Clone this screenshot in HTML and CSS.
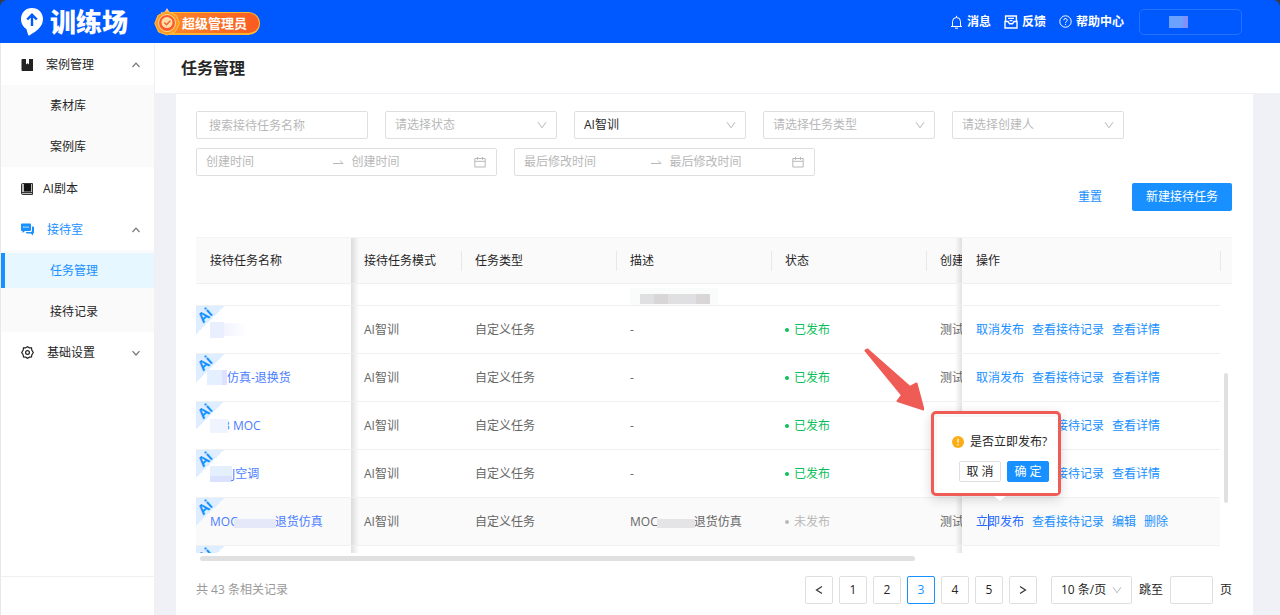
FILE: index.html
```html
<!DOCTYPE html>
<html lang="zh-CN">
<head>
<meta charset="utf-8">
<title>任务管理</title>
<link rel="stylesheet" href="styles.css">
</head>
<body>
<svg class="sprite" width="0" height="0" aria-hidden="true">
  <symbol id="chev" viewBox="0 0 10 10"><path d="M1 2.2 5 7.8 9 2.2" fill="none" stroke="currentColor"/></symbol>
  <symbol id="up" viewBox="0 0 10 10"><path d="M1.5 7 5 3.2 8.5 7" fill="none" stroke="currentColor" stroke-width="1.2"/></symbol>
  <symbol id="down" viewBox="0 0 10 10"><path d="M1.5 3.2 5 7 8.500 3.2" fill="none" stroke="currentColor" stroke-width="1.2"/></symbol>
  <symbol id="swap" viewBox="0 0 12 12"><path d="M1 7.500H11L8 4.500" fill="none" stroke="currentColor"/></symbol>
  <symbol id="cal" viewBox="0 0 12 12"><path d="M.8 2.500h10.400v8.500H.8zM.8 5.300h10.400M3.500 1v2.800M8.500 1v2.800" fill="none" stroke="currentColor"/></symbol>
</svg>
<div class="app">
  <header class="topbar">
    <a class="brand" href="#">
      <svg width="24" height="30" viewBox="0 0 24 30" aria-hidden="true">
        <path d="M12 1C5.500 1 1 5.900 1 12c0 5 2.600 8 5.500 10.200L8 27.500c.2 1 1 1.200 1.800.7C14 25.500 23 21 23 12 23 5.900 18.500 1 12 1z" fill="#fff"/>
        <path d="M12 19V9M7.200 12.500 12 7.700l4.800 4.800" fill="none" stroke="#0059ff" stroke-width="2.400"/>
      </svg>
      <span>训练场</span>
    </a>
    <div class="role">
      <svg class="medal" width="27" height="29" viewBox="0 0 27 29" aria-hidden="true">
        <path d="M7 5l3 1 3-5 3 5 3-1-1 6H8z" fill="#ffc9a8"/>
        <path d="M13 4l9.500 4.500 3 8-4.500 8.500-8 3-8.500-3L.8 16.500l3-8z" fill="#ff9a1f" stroke="#ffc04a"/>
        <circle cx="13" cy="16" r="8.500" fill="#ff5a2c" stroke="#ffe0a0"/>
        <circle cx="13" cy="15.500" r="5.500" fill="#ffdfa8"/>
        <path d="M10.300 15.500l2.200 2.200 3.800-4" fill="none" stroke="#f0642d" stroke-width="1.500"/>
      </svg>
      <span>超级管理员</span>
    </div>
    <nav class="tools">
      <a href="#"><svg width="13" height="14" viewBox="0 0 13 14" aria-hidden="true"><path d="M1 11.500h11M2.500 11.500V6.500a4 4 0 0 1 8 0v5M6.500 2.500V.8M5 13.200h3" fill="none" stroke="#fff"/></svg>消息</a>
      <a href="#"><svg width="14" height="14" viewBox="0 0 14 14" aria-hidden="true"><path d="M1.600 7V1h10.800v6M1 6.500h3l1.500 2.300h3L10 6.500h3V13H1zM4 3.400h6M5.500 5.600h3" fill="none" stroke="#fff" stroke-width="1.400"/></svg>反馈</a>
      <a href="#"><svg width="13" height="13" viewBox="0 0 13 13" aria-hidden="true"><circle cx="6.500" cy="6.500" r="5.700" fill="none" stroke="#fff"/><path d="M4.800 5.200a1.700 1.700 0 1 1 2.500 1.500q-.8.400-.8 1.300M6.500 8.900v1" fill="none" stroke="#fff"/></svg>帮助中心</a>
      <button class="account" type="button" aria-label="账户"><i></i><i></i></button>
    </nav>
  </header>
  <div class="body">
    <aside class="side">
      <nav class="menu">
        <a class="item" href="#"><svg width="12" height="12" viewBox="0 0 12 12" aria-hidden="true"><path d="M1.500 0H5v5.500l1.500-1.200L8 5.500V0h1.800v0H12v12H1.500Q.5 12 .5 11V1q0-1 1-1z" fill="#222"/></svg><span>案例管理</span><svg class="arr" width="10" height="10"><use href="#up"/></svg></a>
        <div class="sub"><a class="item" href="#">素材库</a><a class="item" href="#">案例库</a></div>
        <a class="item tight" href="#"><svg width="12" height="12" viewBox="0 0 12 12" aria-hidden="true"><path d="M1.500.5h10v11h-10Q.5 11.500.5 10V1.500q0-1 1-1z" fill="#bbb" stroke="#333"/><path d="M3 1h7v7.500H3z" fill="#111"/><path d="M1 9.500h10" stroke="#333"/></svg><span>AI剧本</span></a>
        <a class="item open" href="#"><svg width="13" height="13" viewBox="0 0 13 13" aria-hidden="true"><path d="M1 .5h8q1 0 1 1v5.500q0 1-1 1H4l-2.500 2V8H1q-1 0-1-1V1.500q0-1 1-1z" fill="#1890ff"/><path d="M11 3.500h1q1 0 1 1v5q0 1-1 1v2l-2.200-2H6q-1 0-1-1V9h4.500Q11 9 11 7.500z" fill="#1890ff"/><path d="M2.300 4.200h1.200M4.400 4.200h1.200M6.500 4.200h1.200" stroke="#fff" stroke-width="1.200"/></svg><span>接待室</span><svg class="arr" width="10" height="10"><use href="#up"/></svg></a>
        <div class="sub"><a class="item" href="#" aria-current="page"><b>任务管理</b></a><a class="item" href="#">接待记录</a></div>
        <a class="item" href="#"><svg width="13" height="13" viewBox="0 0 13 13" aria-hidden="true"><path d="M4.600 1.800 6.500.7l1.900 1.100 2.100.1.300 2.200 1.500 2.400-1.500 2.400-.3 2.100-2.100.2-1.900 1.100-1.900-1.100-2.100-.2-.3-2.100L.7 6.500l1.500-2.400.3-2.200z" fill="none" stroke="#222" stroke-width="1.200"/><circle cx="6.500" cy="6.500" r="1.900" fill="none" stroke="#222" stroke-width="1.200"/></svg><span>基础设置</span><svg class="arr" width="10" height="10"><use href="#down"/></svg></a>
      </nav>
      <div class="side-foot"></div>
    </aside>
    <main class="main">
      <h1>任务管理</h1>
      <section class="card">
        <form class="filters">
          <input class="box name" type="text" placeholder="搜索接待任务名称" aria-label="搜索接待任务名称">
          <div class="box sel"><select aria-label="状态"><option>请选择状态</option></select><svg width="10" height="10"><use href="#chev"/></svg></div>
          <div class="box sel filled"><select aria-label="模式"><option>AI智训</option></select><svg width="10" height="10"><use href="#chev"/></svg></div>
          <div class="box sel"><select aria-label="任务类型"><option>请选择任务类型</option></select><svg width="10" height="10"><use href="#chev"/></svg></div>
          <div class="box sel"><select aria-label="创建人"><option>请选择创建人</option></select><svg width="10" height="10"><use href="#chev"/></svg></div>
          <div class="box range"><input type="text" placeholder="创建时间" aria-label="创建时间起"><svg width="12" height="12"><use href="#swap"/></svg><input type="text" placeholder="创建时间" aria-label="创建时间止"><svg width="12" height="12"><use href="#cal"/></svg></div>
          <div class="box range"><input type="text" placeholder="最后修改时间" aria-label="最后修改时间起"><svg width="12" height="12"><use href="#swap"/></svg><input type="text" placeholder="最后修改时间" aria-label="最后修改时间止"><svg width="12" height="12"><use href="#cal"/></svg></div>
        </form>
        <div class="actions"><button class="reset" type="button">重置</button><button class="primary" type="button">新建接待任务</button></div>
        <div class="tablewrap">
          <div class="viewport">
            <table>
              <colgroup><col class="c1"><col class="c2"><col class="c3"><col class="c4"><col class="c3"><col class="c6"><col class="c7"><col class="c8"></colgroup>
              <thead><tr><th>接待任务名称</th><th class="sl">接待任务模式</th><th>任务类型</th><th>描述</th><th>状态</th><th class="sr">创建人</th><th>操作</th><th></th></tr></thead>
              <tbody>
                <tr class="part"><td></td><td class="sl"></td><td></td><td><div class="mosaic"><i></i><i></i><i></i><i></i><i></i></div></td><td></td><td class="sr"></td><td></td><td></td></tr>
                <tr><td><em><span>Ai</span></em><a class="name-link" href="#"><i class="m1"></i><i class="m2"></i></a></td><td class="sl">AI智训</td><td>自定义任务</td><td>-</td><td><span class="on">已发布</span></td><td class="sr">测试员</td><td><div class="ops"><a href="#">取消发布</a><a href="#">查看接待记录</a><a href="#">查看详情</a></div></td><td></td></tr>
                <tr><td><em><span>Ai</span></em><a class="name-link" href="#"><i class="m3"></i>仿真-退换货</a></td><td class="sl">AI智训</td><td>自定义任务</td><td>-</td><td><span class="on">已发布</span></td><td class="sr">测试员</td><td><div class="ops"><a href="#">取消发布</a><a href="#">查看接待记录</a><a href="#">查看详情</a></div></td><td></td></tr>
                <tr><td><em><span>Ai</span></em><a class="name-link" href="#"><i class="m4"></i>3 MOC</a></td><td class="sl">AI智训</td><td>自定义任务</td><td>-</td><td><span class="on">已发布</span></td><td class="sr"></td><td><div class="ops under"><a href="#">查看接待记录</a><a href="#">查看详情</a></div></td><td></td></tr>
                <tr><td><em><span>Ai</span></em><a class="name-link" href="#"><i class="m5"></i>J空调</a></td><td class="sl">AI智训</td><td>自定义任务</td><td>-</td><td><span class="on">已发布</span></td><td class="sr"></td><td><div class="ops under"><a href="#">查看接待记录</a><a href="#">查看详情</a></div></td><td></td></tr>
                <tr class="hover"><td><em><span>Ai</span></em><a class="name-link" href="#">MOC<i class="m6"></i>退货仿真</a></td><td class="sl">AI智训</td><td>自定义任务</td><td><span class="desc">MOC<i class="m7"></i>退货仿真</span></td><td><span class="off">未发布</span></td><td class="sr">测试员</td><td><div class="ops"><a class="active" href="#">立即发布</a><a href="#">查看接待记录</a><a href="#">编辑</a><a href="#">删除</a></div></td><td></td></tr>
                <tr><td><em><span>Ai</span></em></td><td class="sl"></td><td></td><td></td><td></td><td class="sr"></td><td></td><td></td></tr>
              </tbody>
            </table>
          </div>
          <div class="vbar"></div>
          <svg class="pointer" width="60" height="64" viewBox="0 0 60 64" aria-hidden="true"><path d="M3.500 1.500 46 39l6.500-3.500L59.500 61.500 33.500 53l4.500-6L1.500 2.500z" fill="#ef5b55" stroke="#ef5b55" stroke-width="2" stroke-linejoin="round"/></svg>
          <div class="frame">
            <div class="pop" role="dialog" aria-label="是否立即发布">
              <p><svg width="12" height="12" viewBox="0 0 12 12" aria-hidden="true"><circle cx="6" cy="6" r="6" fill="#faad14"/><path d="M6 2.800v4M6 8v1.300" stroke="#fff" stroke-width="1.200"/></svg>是否立即发布?</p>
              <div class="pop-actions"><button type="button">取 消</button><button class="ok" type="button">确 定</button></div>
            </div>
          </div>
        </div>
        <div class="hbar"></div>
        <footer class="foot">
          <span class="total">共 43 条相关记录</span>
          <nav class="pages" aria-label="分页">
            <button type="button" aria-label="上一页"><svg width="8" height="10" viewBox="0 0 8 10"><path d="M7 1.500 1.500 5 7 8.500" fill="none" stroke="#333" stroke-width="1.200"/></svg></button>
            <button type="button">1</button><button type="button">2</button><button class="cur" type="button" aria-current="page">3</button><button type="button">4</button><button type="button">5</button>
            <button type="button" aria-label="下一页"><svg width="8" height="10" viewBox="0 0 8 10"><path d="M1 1.500 6.500 5 1 8.500" fill="none" stroke="#333" stroke-width="1.200"/></svg></button>
          </nav>
          <div class="box sel size"><select aria-label="每页条数"><option>10 条/页</option></select><svg width="10" height="10"><use href="#chev"/></svg></div>
          <label class="jump">跳至<input class="box" type="text">页</label>
        </footer>
      </section>
    </main>
  </div>
</div>
</body>
</html>
```
FILE: styles.css
```css
* { box-sizing: border-box; }
html { background: #3a3d42; }
body { margin: 0; font: 12px/18px "Open Sans", "Noto Sans CJK SC", sans-serif; color: #262626; }
a { color: inherit; text-decoration: none; }
button, input, select { font: inherit; color: inherit; }
button { cursor: pointer; padding: 0; }
i, em { font-style: normal; }
svg { flex: none; display: block; }
.sprite { position: absolute; }
.app { height: 100vh; min-height: 615px; display: flex; flex-direction: column; overflow: hidden; border-radius: 7px 7px 0 0; }

.topbar { flex: none; height: 43px; padding: 0 38px 0 20px; display: flex; align-items: center; background: #0059ff; color: #fff; }
.brand { display: flex; align-items: center; gap: 6px; font-size: 26px; line-height: 36px; font-weight: 900; }
.role { position: relative; margin: 3px 0 0 32px; height: 23px; padding: 0 12px 0 21px; display: flex; align-items: center; border-radius: 12px; border: 1px solid #ffb52e; border-bottom-width: 2px; background: linear-gradient(90deg, #ff8a2c, #f95a20); font-size: 13px; font-weight: 700; }
.medal { position: absolute; left: -7px; top: -6px; }
.tools { margin-left: auto; display: flex; align-items: center; gap: 13px; font-weight: 700; }
.tools a { display: flex; align-items: center; gap: 4px; }
.account { width: 103px; height: 26px; margin-left: 2px; padding-left: 29px; display: flex; align-items: center; border: 1px solid #2472ff; border-radius: 5px; background: none; }
.account i { width: 14px; height: 12px; background: #6ba1ff; }
.account i + i { width: 5px; background: #8291fa; }

.body { flex: 1; display: flex; min-height: 0; }
.side { width: 155px; flex: none; display: flex; flex-direction: column; background: #fff; border-left: 1px solid #e6e8eb; border-right: 1px solid #f0f0f0; }
.menu { padding-top: 1px; flex: 1; }
.item { height: 41px; padding: 0 13px 0 20px; display: flex; align-items: center; gap: 13px; }
.item.tight { gap: 10px; margin-top: 1px; }
.arr { margin-left: auto; color: #777; }
.open { color: #1890ff; }
.sub { background: #fafafa; }
.sub .item { padding: 0 0 0 49px; }
.sub .item[aria-current] { padding: 3px 0; color: #1890ff; }
.item b { flex: 1; height: 35px; line-height: 35px; padding-left: 45px; font-weight: 400; background: #e6f7ff; border-left: 4px solid #1890ff; }
.side-foot { height: 39px; border-top: 1px solid #f0f0f0; }

.main { flex: 1; min-width: 0; background: #eff1f6; }
h1 { margin: 0; height: 50px; padding-left: 26px; font-size: 16px; line-height: 50px; background: #fff; }
.card { margin: 1px 27px 0 21px; padding: 17px 21px 11px 20px; min-height: calc(100vh - 94px); background: #fff; }
.filters { display: flex; flex-wrap: wrap; gap: 9px 17px; }
.box { height: 28px; border: 1px solid #dfdfdf; border-radius: 2px; background: #fff; outline: 0; }
.name { width: 172px; padding: 0 12px; }
::placeholder { color: #b8b8b8; opacity: 1; }
.sel { width: 172px; display: flex; align-items: center; padding-right: 9px; color: #b8b8b8; }
.sel select { flex: 1; min-width: 0; height: 26px; padding: 0 0 0 9px; border: 0; outline: 0; background: none; appearance: none; }
.filled select, .size select { color: #262626; }
.range { width: 301px; display: flex; align-items: center; padding: 0 10px 0 9px; color: #b8b8b8; }
.range input { flex: 1; min-width: 0; border: 0; outline: 0; padding: 0; background: none; }
.range input:first-child { margin-right: 3px; }
.range input + svg { margin-right: 8px; }
.range input + svg:last-child { margin-right: 0; }

.actions { margin-top: 7px; display: flex; justify-content: flex-end; gap: 30px; }
.reset { border: 0; background: none; color: #1890ff; }
.primary { width: 100px; height: 28px; border: 0; border-radius: 2px; background: #1890ff; color: #fff; }

.tablewrap { position: relative; margin-top: 26px; }
.viewport { max-height: 316px; overflow: hidden; }
table { width: 100%; table-layout: fixed; border-collapse: separate; border-spacing: 0; }
.c1, .c3 { width: 155px; }
.c2 { width: 110px; }
.c6 { width: 36px; }
.c7 { width: 258px; }
.c8 { width: 12px; }
th, td { padding: 0 0 0 14px; text-align: left; font-weight: 400; white-space: nowrap; overflow: hidden; border-bottom: 1px solid #f0f0f0; background-repeat: no-repeat; }
th { height: 47px; border-top: 1px solid #f3f3f3; background-color: #fafafa; }
th:nth-child(n+3):nth-child(-n+5), th:last-child { background-image: linear-gradient(#e8e8e8, #e8e8e8); background-size: 1px 20px; background-position: 0 50%; }
th.sr { background-image: linear-gradient(#e8e8e8, #e8e8e8), linear-gradient(270deg, rgba(0,0,0,.11), rgba(0,0,0,0)); background-size: 1px 20px, 7px 100%; background-position: 0 50%, 100% 0; }
td { height: 48px; color: #666; }
.part td { height: 22px; }
td:last-child { border: 0; }
td:first-child { position: relative; }
.sl { padding-left: 13px; background-image: linear-gradient(90deg, rgba(0,0,0,.12), rgba(0,0,0,0)); background-size: 8px 100%; }
td.sr { background-image: linear-gradient(270deg, rgba(0,0,0,.11), rgba(0,0,0,0)); background-size: 7px 100%; background-position: 100% 0; }
.hover td:not(:last-child) { background-color: #fafafa; }
em { position: absolute; left: 0; top: 0; width: 28px; height: 28px; background: linear-gradient(135deg, #deedff 50%, transparent 50%); }
em span { display: block; width: 18px; line-height: 18px; text-align: center; font-size: 14px; font-weight: 700; color: #1593ff; transform: rotate(-42deg); }
.name-link, .desc { position: relative; display: flex; align-items: center; }
.name-link { color: #4a7dff; }
.m1 { width: 14px; height: 16px; background: #e9efff; }
.m2 { width: 24px; height: 13px; background: linear-gradient(90deg, #f1f4ff, #fff); }
.m3 { width: 20px; height: 15px; margin-left: -3px; background: linear-gradient(90deg, #e4efff 75%, #dfe2ff 75%); }
.m4 { width: 18px; height: 14px; margin-right: -5px; background: #eff4ff; z-index: 1; }
.m5 { width: 22px; height: 16px; background: linear-gradient(#e5f0ff 65%, #dbe2ff 65%); }
.m6 { width: 42px; height: 9px; margin: 4px -1px 0 -4px; background: #e4e8f8; z-index: 1; }
.m7 { width: 38px; height: 9px; margin: 4px -1px 0 -1px; background: #e4e4e6; z-index: 1; }
.mosaic { width: 88px; height: 17px; margin-top: 4px; padding: 6px 8px 1px 10px; display: flex; background: #fafbfb; }
.mosaic i { flex: 1; background: #e0e0e2; }
.mosaic i:nth-child(2), .mosaic i:last-child { background: #d8d6d7; }
.on, .off { display: flex; align-items: center; gap: 5px; color: #0abf5b; }
.off { color: #b8b8b8; }
.on::before, .off::before { content: ""; width: 4px; height: 4px; border-radius: 50%; background: currentColor; }
.ops { display: flex; gap: 8px; color: #1890ff; }
.under { padding-left: 56px; }
.active { color: #2468ff; background: linear-gradient(#2468ff, #2468ff) 12px 50% / 1px 16px no-repeat; }
.vbar { position: absolute; right: 4px; top: 136px; width: 4px; height: 130px; border-radius: 2px; background: #e0e0e0; }
.hbar { width: 69%; height: 5px; margin: 3px 0 0 4px; border-radius: 3px; background: #e0e0e0; }
.pointer { position: absolute; right: 308px; top: 111px; }
.frame { position: absolute; right: 171px; top: 174px; padding: 3px 0 0 3px; border: 3px solid #ef5b55; border-radius: 5px; box-shadow: 0 3px 12px rgba(0,0,0,.16); background: #f8f8f8; }
.frame::after { content: ""; position: absolute; left: 60px; top: 100%; margin-top: 3px; border: 6px solid transparent; border-top: 5px solid #fff; border-bottom: 0; }
.pop { width: 121px; padding: 16px 9px 11px 15px; background: #fff; }
.pop p { margin: 0; display: flex; align-items: center; gap: 6px; white-space: nowrap; }
.pop-actions { margin-top: 10px; display: flex; justify-content: flex-end; gap: 6px; }
.pop button { width: 42px; height: 21px; line-height: 19px; border: 1px solid #dfdfdf; border-radius: 2px; background: #fff; }
.pop .ok { border-color: #1890ff; background: #1890ff; color: #fff; }

.foot { margin-top: 15px; display: flex; align-items: center; }
.total { margin-right: auto; color: #999; }
.pages { display: flex; gap: 6px; }
.pages button { width: 28px; height: 28px; display: grid; place-items: center; border: 1px solid #dfdfdf; border-radius: 2px; background: #fff; }
.pages .cur { border-color: #1890ff; color: #1890ff; }
.size { width: 81px; margin: 0 7px 0 14px; }
.jump { display: flex; align-items: center; gap: 7px; }
.jump .box { width: 43px; }
```
